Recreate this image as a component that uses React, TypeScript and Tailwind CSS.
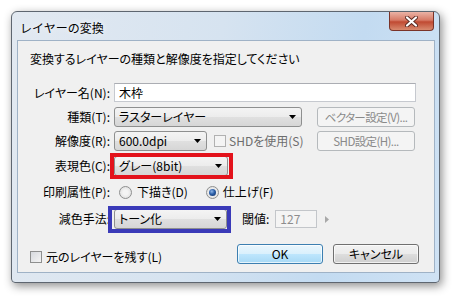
import React from 'react';

function Arrow() {
  return (
    <svg width="7" height="4" viewBox="0 0 7 4" className="shrink-0">
      <polygon points="0,0 7,0 3.5,4" fill="#000" />
    </svg>
  );
}

function Combo({ value, width }: { value: string; width: string }) {
  return (
    <div
      className={`flex h-[20px] items-center justify-between rounded-[3px] border border-[#8e8f8f] bg-[linear-gradient(#f4f4f4_0%,#ececec_50%,#e0e0e0_50%,#d6d6d6_100%)] pl-[4px] pr-[5px] ${width}`}
    >
      <span className="whitespace-nowrap">{value}</span>
      <Arrow />
    </div>
  );
}

function Label({ children }: { children: React.ReactNode }) {
  return <div className="w-[92px] shrink-0 whitespace-nowrap text-right">{children}</div>;
}

function DisabledButton({ children }: { children: React.ReactNode }) {
  return (
    <div className="ml-auto mr-[19px] flex h-[20px] w-[98px] items-center justify-center whitespace-nowrap rounded-[3px] border border-[#b5b9bc] bg-[#f4f4f4] text-[11.5px] tracking-[-0.6px] text-[#8a8a8a]">
      {children}
    </div>
  );
}

function Radio({ checked }: { checked?: boolean }) {
  return (
    <div className="flex h-[13px] w-[13px] items-center justify-center rounded-full border border-[#8e8f8f] bg-[radial-gradient(circle,#f4f4f4_30%,#d8d8d8_100%)]">
      {checked && (
        <div className="h-[7px] w-[7px] rounded-full bg-[radial-gradient(circle_at_40%_35%,#8fb6e8_0%,#2a5ea8_45%,#0f2a5c_100%)]" />
      )}
    </div>
  );
}

export default function App() {
  return (
    <div className="h-[298px] w-[454px] bg-white pl-[11px] pt-[11px] font-['Noto_Sans_CJK_JP',sans-serif] text-[12px] leading-[16px] text-black [font-feature-settings:'palt']">
      <div className="flex h-[272px] w-[429px] flex-col rounded-t-[6px] rounded-b-[4px] border border-[#5e6670] bg-[linear-gradient(100deg,#e2e9f1_0%,#d6e3f0_45%,#c3dbf1_75%,#cfe2f4_100%)] shadow-[2px_3px_10px_rgba(0,0,0,0.45)]">
        {/* title bar */}
        <div className="flex h-[28px] items-start">
          <div className="pl-[8px] pt-[8px] [font-feature-settings:normal] [text-shadow:0_0_6px_#fff]">
            レイヤーの変換
          </div>
          <div className="ml-auto mr-[5px] flex h-[19px] w-[45px] items-center justify-center rounded-b-[4px] border border-t-0 border-[#7a3328] bg-[linear-gradient(#eab3a6_0%,#d77a66_45%,#c04a32_55%,#d88a6f_100%)]">
            <svg width="13" height="11" viewBox="0 0 13 11">
              <path
                d="M2 1.5 L11 9.5 M11 1.5 L2 9.5"
                stroke="#5a2a22"
                strokeWidth="4"
                strokeLinecap="round"
              />
              <path
                d="M2 1.5 L11 9.5 M11 1.5 L2 9.5"
                stroke="#fff"
                strokeWidth="2.2"
                strokeLinecap="round"
              />
            </svg>
          </div>
        </div>

        {/* client area */}
        <div className="ml-[5px] flex h-[233px] w-[418px] flex-col border border-[#9fb2c6] bg-[#f0f0f0]">
          <div className="ml-[12px] mt-[10px] h-[16px] whitespace-nowrap">
            変換するレイヤーの種類と解像度を指定してください
          </div>

          <div className="mt-[16px] flex h-[19px] items-center">
            <Label>レイヤー名(N):</Label>
            <div className="ml-[4px] flex h-[19px] w-[302px] items-center border border-[#c6c9cf] border-t-[#abadb3] bg-white pl-[4px]">
              木枠
            </div>
          </div>

          <div className="mt-[5px] flex h-[20px] items-center">
            <Label>種類(T):</Label>
            <div className="ml-[4px]">
              <Combo value="ラスターレイヤー" width="w-[188px]" />
            </div>
            <DisabledButton>ベクター設定(V)...</DisabledButton>
          </div>

          <div className="mt-[4px] flex h-[20px] items-center">
            <Label>解像度(R):</Label>
            <div className="ml-[4px]">
              <Combo value="600.0dpi" width="w-[93px]" />
            </div>
            <div className="ml-[7px] h-[12px] w-[12px] border border-[#b1b1b1] bg-[#f4f4f4]" />
            <div className="ml-[3px] whitespace-nowrap text-[#6d6d6d]">SHDを使用(S)</div>
            <DisabledButton>SHD設定(H)...</DisabledButton>
          </div>

          <div className="mt-[5px] flex h-[20px] items-center">
            <Label>表現色(C):</Label>
            <div className="relative ml-[4px]">
              <Combo value="グレー(8bit)" width="w-[114px]" />
              <div className="absolute left-[-4px] top-[-3px] h-[26px] w-[123px] border-4 border-[#e3121b]" />
            </div>
          </div>

          <div className="mt-[6px] flex h-[20px] items-center">
            <Label>印刷属性(P):</Label>
            <div className="ml-[9px]">
              <Radio />
            </div>
            <div className="ml-[5px] whitespace-nowrap">下描き(D)</div>
            <div className="ml-[18px]">
              <Radio checked />
            </div>
            <div className="ml-[4px] whitespace-nowrap">仕上げ(F)</div>
          </div>

          <div className="mt-[7px] flex h-[20px] items-center">
            <Label>減色手法:</Label>
            <div className="relative ml-[4px]">
              <Combo value="トーン化" width="w-[113px]" />
              <div className="absolute left-[-6px] top-[-3px] h-[27px] w-[123px] border-4 border-[#3a3ab8]" />
            </div>
            <div className="ml-[15px] whitespace-nowrap">閾値:</div>
            <div className="ml-[6px] flex h-[18px] w-[42px] items-center border border-[#c3c6ca] bg-[#f4f4f4] pl-[4px] text-[#8d8d8d]">
              127
            </div>
            <svg width="4" height="7" viewBox="0 0 4 7" className="ml-[8px]">
              <polygon points="0,0 4,3.5 0,7" fill="#a8a8a8" />
            </svg>
          </div>

          <div className="mt-[15px] flex h-[20px] items-center">
            <div className="ml-[12px] mt-[5px] flex items-center">
              <div className="h-[12px] w-[12px] border border-[#8e8f8f] bg-[linear-gradient(135deg,#d6d9de_0%,#f4f4f4_100%)]" />
              <div className="ml-[4px] whitespace-nowrap">元のレイヤーを残す(L)</div>
            </div>
            <div className="ml-auto flex h-[20px] w-[86px] items-center justify-center rounded-[3px] border border-[#3c7fb1] bg-[linear-gradient(#eaf6fd_0%,#d9f0fc_50%,#bee6fd_50%,#a7d9f5_100%)] shadow-[inset_0_0_0_1px_rgba(255,255,255,0.7)]">
              OK
            </div>
            <div className="ml-[10px] mr-[15px] flex h-[20px] w-[86px] items-center justify-center rounded-[3px] border border-[#707070] bg-[linear-gradient(#f2f2f2_0%,#ebebeb_50%,#dddddd_50%,#cfcfcf_100%)] shadow-[inset_0_0_0_1px_rgba(255,255,255,0.7)]">
              キャンセル
            </div>
          </div>
        </div>
      </div>
    </div>
  );
}
